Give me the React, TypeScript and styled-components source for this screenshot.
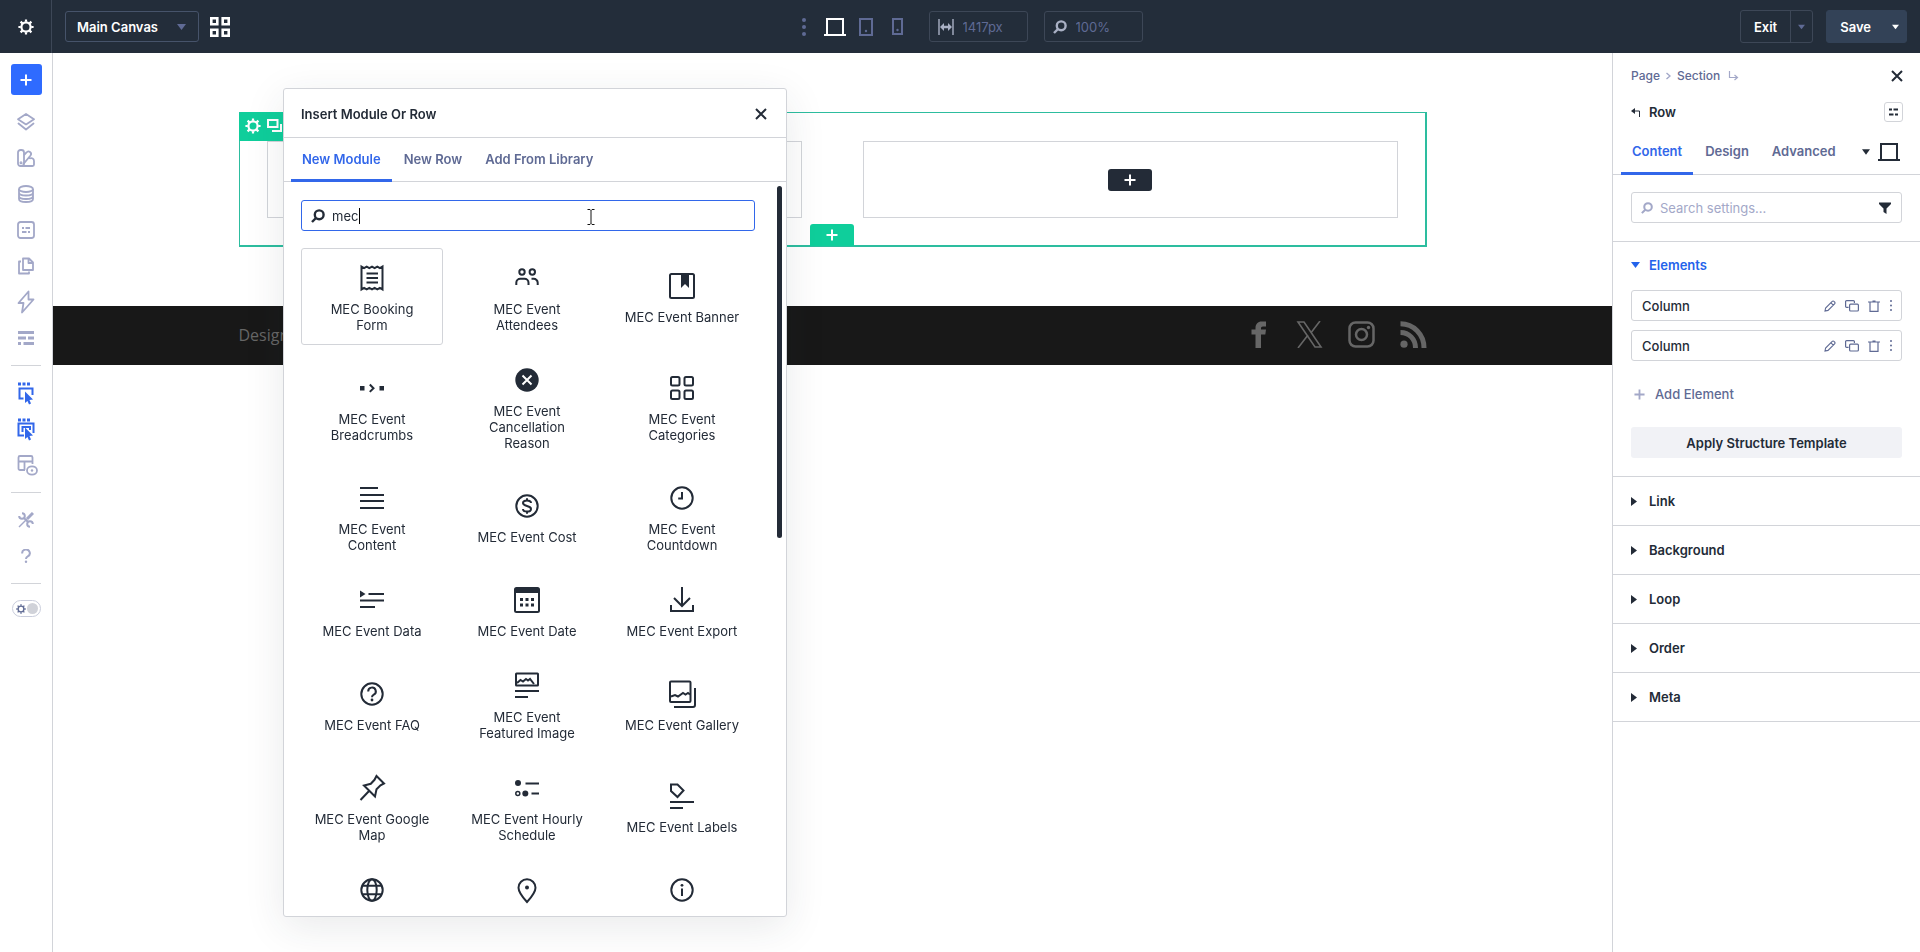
import React from 'react';
import styled, { createGlobalStyle, css } from 'styled-components';

const c = {
  bar: '#232d3a',
  barLine: '#3d4757',
  ink: '#232b37',
  muted: '#5f6a94',
  soft: '#a3a8c8',
  line: '#d2d4d9',
  blue: '#3267ea',
  green: '#0fce9b',
};

const GlobalStyle = createGlobalStyle`
  *, *::before, *::after { box-sizing: border-box; }
  body {
    margin: 0;
    background: #fff;
    color: ${c.ink};
    font-family: Inter, "Liberation Sans", sans-serif;
    font-size: 13px;
    line-height: 16px;
    overflow: hidden;
  }
  button, input, select { font: inherit; color: inherit; margin: 0; padding: 0; border: 0; background: none; outline: none; }
  button { cursor: pointer; }
  svg { display: block; flex: none; }
  ul { list-style: none; margin: 0; padding: 0; }
`;

/* ---------- icons ---------- */

type IconProps = { size?: number; width?: number; height?: number; box?: string; sw?: number; children?: React.ReactNode };

const Svg = ({ size = 28, width, height, box, sw = 2, children }: IconProps) => (
  <svg
    width={width ?? size}
    height={height ?? size}
    viewBox={box ?? `0 0 ${width ?? size} ${height ?? size}`}
    fill="none"
    stroke="currentColor"
    strokeWidth={sw}
    aria-hidden="true"
  >
    {children}
  </svg>
);

const Filled = { fill: 'currentColor', stroke: 'none' } as const;

const Gear = ({ size = 16 }: { size?: number }) => (
  <Svg size={size} box="0 0 16 16">
    <circle cx="8" cy="8" r="4.6" strokeWidth="2.2" />
    <path d="M8 .4v2.4M8 13.2v2.4M.4 8h2.4M13.2 8h2.4M2.6 2.6l1.8 1.8M11.6 11.6l1.8 1.8M2.6 13.4l1.8-1.8M11.6 4.4l1.8-1.8" strokeWidth="2.2" />
  </Svg>
);

const Plus = ({ size = 12, sw = 2 }: { size?: number; sw?: number }) => (
  <Svg size={size} box="0 0 12 12" sw={sw}><path d="M6 .5v11M.5 6h11" /></Svg>
);

const Triangle = ({ dir = 'down', w = 9 }: { dir?: 'down' | 'right'; w?: number }) => (
  <Svg width={dir === 'down' ? w : 6} height={dir === 'down' ? 6 : 9} box={dir === 'down' ? '0 0 9 6' : '0 0 6 9'}>
    <path d={dir === 'down' ? 'M0 0h9L4.5 6z' : 'M0 0v9l6-4.5z'} {...Filled} />
  </Svg>
);

const Close = () => <Svg size={12} sw={2}><path d="M1 1l10 10M11 1L1 11" /></Svg>;

const Magnifier = ({ size = 14, sw = 2.4 }: { size?: number; sw?: number }) => (
  <Svg size={size} box="0 0 14 14" sw={sw}><circle cx="8.2" cy="5.8" r="4.4" /><path d="M5 9L1 13" /></Svg>
);

const Laptop = () => <Svg width={22} height={18}><path d="M3 16V1h16v15M0 17h22" /></Svg>;

const More = ({ h = 18, r = 2 }: { h?: number; r?: number }) => (
  <Svg width={4} height={h}>
    <circle cx="2" cy={r} r={r} {...Filled} />
    <circle cx="2" cy={h / 2} r={r} {...Filled} />
    <circle cx="2" cy={h - r} r={r} {...Filled} />
  </Svg>
);

const Pencil = () => (
  <Svg size={12} sw={1.1}><path d="M1 11l.6-3L8.2 1.4a1.2 1.2 0 0 1 1.8 0l.6.6a1.2 1.2 0 0 1 0 1.8L4 10.4zM7 2.8l2.3 2.3" /></Svg>
);
const Duplicate = () => (
  <Svg width={14} height={12} sw={1.2}><path d="M3.6 7.4H1.6a1 1 0 0 1-1-1V1.6a1 1 0 0 1 1-1h6.8a1 1 0 0 1 1 1V3" /><rect x="4.6" y="4.2" width="8.8" height="6.8" rx="1" /></Svg>
);
const Trash = () => <Svg width={12} height={12} sw={1.2}><path d="M0 2h12M4.5 1h3M2 2v9.4h8V2" /></Svg>;

const moduleIcons: Record<string, React.ReactNode> = {
  booking: (
    <Svg>
      <path d="M3.5 2.6l2.6 1.5 2.6-1.5 2.6 1.5L14 2.6l2.6 1.5 2.7-1.5 2.6 1.5 2.6-1.5v22.8l-2.6-1.5-2.6 1.5-2.7-1.5-2.6 1.5-2.7-1.5-2.6 1.5-2.6-1.5-2.6 1.5z" />
      <path d="M8.5 9.5H20M8.5 14H20M8.5 18.5H20" />
    </Svg>
  ),
  attendees: (
    <Svg>
      <circle cx="9" cy="8" r="2.7" /><circle cx="19.3" cy="8" r="2.7" />
      <path d="M3.3 21v-2.2a4 4 0 0 1 4-4h4.2a4 4 0 0 1 4 4V21M18.5 14.8h2.2a4 4 0 0 1 4 4V21" />
    </Svg>
  ),
  banner: (
    <Svg><rect x="2" y="2" width="24" height="24" rx="1.5" /><path d="M13 2h8v14l-4-4-4 4z" {...Filled} /></Svg>
  ),
  breadcrumbs: (
    <Svg><path d="M2 12h4.5v4.5H2zM21.5 12H26v4.5h-4.5z" {...Filled} /><path d="M11.8 10.5l3.7 3.7-3.7 3.7" /></Svg>
  ),
  cancel: (
    <Svg><circle cx="14" cy="14" r="11.7" {...Filled} /><path d="M9.5 9.5l9 9M18.5 9.5l-9 9" stroke="#fff" /></Svg>
  ),
  categories: (
    <Svg>
      <rect x="3" y="3" width="8.5" height="8.5" rx="1.5" /><rect x="16.5" y="3" width="8.5" height="8.5" rx="1.5" />
      <rect x="3" y="16.5" width="8.5" height="8.5" rx="1.5" /><rect x="16.5" y="16.5" width="8.5" height="8.5" rx="1.5" />
    </Svg>
  ),
  content: <Svg><path d="M2 4h18M2 11h24M2 17h24M2 24h24" /></Svg>,
  cost: (
    <Svg>
      <circle cx="14" cy="14" r="10.7" />
      <path d="M18 11c0-1.7-1.7-2.6-4-2.6s-4 .9-4 2.7c0 3.8 8 2 8 5.8 0 1.8-1.7 2.7-4 2.7s-4-.9-4-2.6M14 6.2v2.6M14 19.2v2.6" />
    </Svg>
  ),
  countdown: <Svg><circle cx="14" cy="14" r="10.7" /><path d="M14 8v6.5h-3.8" /></Svg>,
  data: <Svg><path d="M2 4.5v7L7.5 8z" {...Filled} /><path d="M10.5 8H26M2 14.5h24M2 21h15" /></Svg>,
  date: (
    <Svg>
      <rect x="2" y="2" width="24" height="24" rx="1.5" /><path d="M2 2h24v5H2z" {...Filled} />
      <path d="M7 12h3v3H7zM12.5 12h3v3h-3zM18 12h3v3h-3zM7 17.5h3v3H7zM12.5 17.5h3v3h-3zM18 17.5h3v3h-3z" {...Filled} />
    </Svg>
  ),
  export: <Svg><path d="M14 1v18M6 12l8 8 8-8M3 19v6h22v-6" /></Svg>,
  faq: (
    <Svg>
      <circle cx="14" cy="14" r="10.7" />
      <path d="M10.2 11.5a3.8 3.8 0 1 1 5.6 3.2c-1.2.7-1.8 1.2-1.8 2.6" /><circle cx="14" cy="20" r="1.4" {...Filled} />
    </Svg>
  ),
  featured: (
    <Svg><rect x="3" y="1.5" width="22" height="12" rx=".5" /><path d="M4 11l3.5-3 2.5 1.5L13 7l2 1.5 2-1.5 4 5M2 19h24M2 25h13" /></Svg>
  ),
  gallery: (
    <Svg>
      <rect x="2" y="1.5" width="20.5" height="20.5" rx="1" /><path d="M3 16.5l4-1.5 3 1.5 5-3.5 2.5 1.5 2.5-1.5 2 1.5M27 8v17a2 2 0 0 1-2 2H6" />
    </Svg>
  ),
  map: <Svg><path d="M18.5 2l7.5 7.5-3.5 1.8-4 4-1.5 7.2L6 11.5l6.8-1.7 3.7-4zM11.5 16.5L2.5 26" /></Svg>,
  hourly: (
    <Svg><circle cx="5" cy="9" r="3" {...Filled} /><circle cx="4.8" cy="19.5" r="2" strokeWidth="1.5" /><circle cx="12.3" cy="19.5" r="3" {...Filled} /><path d="M12.5 9.5H26M18.5 19.5H26" /></Svg>
  ),
  labels: <Svg><path d="M3 2.5h6.5l6 6-6 6.5L3 9zM2 20h24M2 26h13" /></Svg>,
  time: (
    <Svg><circle cx="14" cy="14" r="10.7" /><ellipse cx="14" cy="14" rx="4.7" ry="10.7" /><path d="M4.5 9.7h19M4.5 18.3h19" /></Svg>
  ),
  location: <Svg><path d="M14 26c-5.5-6-8.5-10-8.5-14.3a8.5 8.5 0 0 1 17 0C22.5 16 19.5 20 14 26z" /><circle cx="14" cy="11.5" r="2" {...Filled} /></Svg>,
  info: <Svg><circle cx="14" cy="14" r="10.7" /><path d="M14 12.5V20" /><circle cx="14" cy="9.3" r="1.4" {...Filled} /></Svg>,
};

/* ---------- top bar ---------- */

const Page = styled.div`
  min-height: 100vh;
  display: grid;
  grid-template-rows: 53px 1fr;
`;

const TopBar = styled.header`
  display: grid;
  grid-template-columns: 1fr auto 1fr;
  background: ${c.bar};
  color: #fff;
`;

const BarGroup = styled.div<{ $gap: number; $end?: boolean }>`
  display: flex;
  align-items: center;
  gap: ${p => p.$gap}px;
  ${p => p.$end && css`justify-content: flex-end; padding-right: 13px;`}
`;

const SettingsCell = styled.button`
  width: 52px;
  height: 53px;
  display: grid;
  place-items: center;
  border-right: 1px solid ${c.barLine};
`;

const SelectBox = styled.label`
  position: relative;
  display: flex;
  align-items: center;
  width: 134px;
  height: 31px;
  margin: 0 10px 0 13px;
  border: 1px solid #46536a;
  border-radius: 3px;
  font-weight: 600;
  svg { position: absolute; right: 12px; color: ${c.muted}; pointer-events: none; }
  select { width: 100%; height: 100%; padding-left: 11px; appearance: none; }
`;

const BareButton = styled.button<{ $color?: string }>`
  display: grid;
  place-items: center;
  color: ${p => p.$color ?? 'inherit'};
`;

const Devices = styled.div`
  display: flex;
  align-items: center;
  padding-left: 11px;
  button { width: 31px; height: 31px; }
`;

const BarField = styled.label`
  display: flex;
  align-items: center;
  gap: 9px;
  width: 99px;
  height: 31px;
  padding-left: 8px;
  border: 1px solid ${c.barLine};
  border-radius: 3px;
  color: #a9b0c4;
  input { width: 60px; color: ${c.muted}; }
`;

const SplitButton = styled.div<{ $solid?: boolean }>`
  display: flex;
  height: 33px;
  border-radius: 3px;
  border: 1px solid ${p => (p.$solid ? '#334257' : c.barLine)};
  background: ${p => (p.$solid ? '#334257' : 'transparent')};
  font-weight: 600;
  button:first-child { padding: 0 13px; }
  button:last-child {
    width: 22px;
    display: grid;
    place-items: center;
    ${p => !p.$solid && css`border-left: 1px solid ${c.barLine}; color: ${c.muted};`}
  }
`;

/* ---------- side rail ---------- */

const Body = styled.div`
  display: grid;
  grid-template-columns: 53px minmax(0, 1fr) 308px;
`;

const Rail = styled.nav`
  display: flex;
  flex-direction: column;
  align-items: center;
  padding-top: 11px;
  border-right: 1px solid ${c.line};
`;

const RailAdd = styled.button`
  width: 31px;
  height: 31px;
  margin-bottom: 9px;
  display: grid;
  place-items: center;
  border-radius: 3px;
  background: #2f6bff;
  color: #fff;
`;

const RailButton = styled.button<{ $active?: boolean }>`
  width: 36px;
  height: 36px;
  display: grid;
  place-items: center;
  color: ${p => (p.$active ? c.blue : c.soft)};
`;

const RailLine = styled.hr`
  width: 30px;
  margin: 9px 0;
  border: 0;
  border-top: 1px solid ${c.line};
`;

const ThemeSwitch = styled.label`
  position: relative;
  display: flex;
  align-items: center;
  justify-content: space-between;
  width: 29px;
  height: 17px;
  margin-top: 7px;
  padding: 0 2px 0 3px;
  border: 1px solid #c9cddc;
  border-radius: 9px;
  color: ${c.muted};
  input { position: absolute; inset: 0; opacity: 0; }
  &::after { content: ''; width: 11px; height: 11px; border-radius: 50%; background: #d0d2d9; }
`;

/* ---------- canvas ---------- */

const Canvas = styled.main`
  padding-top: 59px;
`;

const RowFrame = styled.section`
  position: relative;
  display: grid;
  grid-template-columns: 1fr 1fr;
  gap: 61px;
  width: 1188px;
  max-width: 80%;
  margin: 0 auto;
  padding: 28px 27px 27px;
  border: solid #2dbd9f;
  border-width: 1px 2px 2px 1px;
`;

const ColumnFrame = styled.div`
  display: grid;
  place-items: center;
  height: 77px;
  border: 1px solid ${c.line};
`;

const AddChip = styled.button`
  display: grid;
  place-items: center;
  width: 44px;
  height: 22px;
  border-radius: 3px;
  background: ${c.ink};
  color: #fff;
`;

const RowAdd = styled(AddChip)`
  position: absolute;
  bottom: -1px;
  left: 50%;
  transform: translateX(-50%);
  border-radius: 3px 3px 0 0;
  background: ${c.green};
`;

const RowTools = styled.div`
  position: absolute;
  top: -1px;
  left: -1px;
  display: flex;
  align-items: center;
  gap: 6px;
  width: 80px;
  height: 29px;
  padding: 0 6px 2px;
  border-radius: 3px 3px 0 0;
  background: ${c.green};
  color: #fff;
`;

const Footer = styled.footer`
  margin-top: 59px;
  height: 59px;
  background: #181818;
  color: #666;
`;

const FooterInner = styled.div`
  display: flex;
  align-items: center;
  justify-content: space-between;
  width: 1188px;
  max-width: 80%;
  height: 57px;
  margin: 0 auto;
  font: 16px/20px "Open Sans", "Noto Sans", sans-serif;
`;

const Social = styled.div`
  display: flex;
  align-items: center;
  gap: 25px;
  a { color: inherit; }
`;

/* ---------- right panel ---------- */

const Panel = styled.aside`
  border-left: 1px solid ${c.line};
`;

const PanelHead = styled.div`
  display: flex;
  align-items: center;
  justify-content: space-between;
  height: 36px;
  padding: 0 17px 0 18px;
`;

const PanelTop = styled.div`
  padding-top: 5px;
`;

const Crumbs = styled.div`
  display: flex;
  align-items: center;
  gap: 6px;
  font-size: 12px;
  font-weight: 500;
  color: ${c.muted};
  a { color: inherit; text-decoration: none; }
  svg { color: ${c.soft}; }
`;

const RowTitle = styled.div`
  display: flex;
  align-items: center;
  gap: 9px;
  font-weight: 600;
`;

const PresetButton = styled.button`
  width: 19px;
  height: 20px;
  display: grid;
  place-items: center;
  border: 1px solid ${c.line};
  border-radius: 3px;
`;

const Tabs = styled.div`
  display: flex;
  gap: 1px;
  height: 45px;
  padding-left: 8px;
  border-bottom: 1px solid ${c.line};
`;

const Tab = styled.button<{ $active?: boolean }>`
  height: 45px;
  padding: 0 11px;
  border-bottom: 3px solid ${p => (p.$active ? c.blue : 'transparent')};
  color: ${p => (p.$active ? c.blue : c.muted)};
  font-weight: 600;
`;

const ViewPicker = styled.button`
  display: flex;
  align-items: center;
  gap: 8px;
  margin: 0 20px 0 auto;
`;

const SearchWrap = styled.div`
  padding: 17px 18px 18px;
  border-bottom: 1px solid ${c.line};
`;

const Field = styled.label<{ $focused?: boolean }>`
  position: relative;
  display: flex;
  align-items: center;
  gap: 7px;
  height: 31px;
  padding: 0 10px 0 9px;
  border: 1px solid ${p => (p.$focused ? c.blue : c.line)};
  border-radius: 3px;
  color: ${p => (p.$focused ? c.ink : c.soft)};
  input { flex: 1; min-width: 0; caret-color: transparent; }
  input::placeholder { color: ${c.soft}; opacity: 1; }
`;

const FilterButton = styled(BareButton)`
  color: ${c.ink};
`;

const Elements = styled.section`
  padding: 15px 18px 18px;
  border-bottom: 1px solid ${c.line};
`;

const SectionTitle = styled.button<{ $open?: boolean }>`
  display: flex;
  align-items: center;
  gap: ${p => (p.$open ? 9 : 12)}px;
  font-weight: 600;
  color: ${p => (p.$open ? '#2463eb' : c.ink)};
`;

const ElementList = styled.ul`
  display: grid;
  gap: 9px;
  margin: 17px 0 25px;
`;

const ElementRow = styled.li`
  display: flex;
  align-items: center;
  gap: 9px;
  height: 31px;
  padding: 0 8px 0 10px;
  border: 1px solid ${c.line};
  border-radius: 3px;
  font-weight: 500;
  button { color: ${c.muted}; display: grid; }
  button:first-of-type { margin-left: auto; }
`;

const AddElement = styled.button`
  display: flex;
  align-items: center;
  gap: 10px;
  padding-left: 3px;
  font-weight: 500;
  color: ${c.muted};
  svg { color: ${c.soft}; }
`;

const ApplyButton = styled.button`
  width: 100%;
  height: 31px;
  margin-top: 25px;
  border-radius: 3px;
  background: #f1f2f6;
  font-weight: 600;
`;

const Collapsed = styled.section`
  display: flex;
  align-items: center;
  height: 49px;
  padding: 0 18px;
  border-bottom: 1px solid ${c.line};
`;

/* ---------- insert dialog ---------- */

const Dialog = styled.div`
  position: fixed;
  top: 88px;
  bottom: 35px;
  left: 283px;
  width: 504px;
  display: flex;
  flex-direction: column;
  overflow: hidden;
  border: 1px solid ${c.line};
  border-radius: 3px;
  background: #fff;
  box-shadow: 0 10px 40px rgba(40, 45, 60, 0.1);
`;

const DialogHead = styled.div`
  display: flex;
  flex: none;
  align-items: center;
  justify-content: space-between;
  height: 49px;
  padding: 1px 19px 0 17px;
  border-bottom: 1px solid ${c.line};
  font-weight: 600;
`;

const DialogTabs = styled(Tabs)`
  flex: none;
  height: 44px;
  padding-left: 7px;
  ${Tab} { height: 44px; }
`;

const DialogBody = styled.div`
  position: relative;
  flex: 1;
  min-height: 0;
  overflow: hidden;
  padding: 18px 31px 0 17px;
`;

const ScrollThumb = styled.div`
  position: absolute;
  top: 4px;
  right: 4px;
  width: 5px;
  height: 48%;
  border-radius: 3px;
  background: ${c.ink};
`;

const Caret = styled.span`
  position: absolute;
  left: 57px;
  width: 1px;
  height: 16px;
  background: #000;
`;

const Pointer = styled.span`
  position: absolute;
  left: 285px;
  top: 8px;
  color: #111;
`;

const ModuleGrid = styled.div`
  display: grid;
  grid-template-columns: repeat(3, 1fr);
  gap: 5px 13px;
  margin-top: 17px;
  padding-right: 2px;
`;

const ModuleCard = styled.button<{ $hover?: boolean }>`
  display: flex;
  flex-direction: column;
  align-items: center;
  justify-content: center;
  gap: 9px;
  padding: 15px 12px 11px;
  border: 1px solid ${p => (p.$hover ? c.line : 'transparent')};
  border-radius: 3px;
`;

const modules: [string, string][] = [
  ['booking', 'MEC Booking Form'], ['attendees', 'MEC Event Attendees'], ['banner', 'MEC Event Banner'],
  ['breadcrumbs', 'MEC Event Breadcrumbs'], ['cancel', 'MEC Event Cancellation Reason'], ['categories', 'MEC Event Categories'],
  ['content', 'MEC Event Content'], ['cost', 'MEC Event Cost'], ['countdown', 'MEC Event Countdown'],
  ['data', 'MEC Event Data'], ['date', 'MEC Event Date'], ['export', 'MEC Event Export'],
  ['faq', 'MEC Event FAQ'], ['featured', 'MEC Event Featured Image'], ['gallery', 'MEC Event Gallery'],
  ['map', 'MEC Event Google Map'], ['hourly', 'MEC Event Hourly Schedule'], ['labels', 'MEC Event Labels'],
];

const iconModules: [string, string][] = [['time', 'Local time'], ['location', 'Location'], ['info', 'More info']];

const railTop: [string, React.ReactNode][] = [
  ['Layers', <Svg size={18} sw={1.8}><path d="M9 1l8 5.2-8 5.2-8-5.2zM1.5 10.5L9 16.5l7.5-6" strokeLinejoin="round" strokeLinecap="round" /></Svg>],
  ['Presets', <Svg size={18} sw={1.8}><rect x="1" y="1" width="6" height="16" rx="2.5" /><path d="M7 6l2.5-2.5a2.5 2.5 0 0 1 4 3L6 15.5M12.5 9.5c2.5-1 4.5 0 4.5 2.5v3.5a1.500 1.500 0 0 1-1.500 1.500H4.500" /><circle cx="4" cy="13.7" r=".6" /></Svg>],
  ['Data', <Svg size={18} sw={1.8}><ellipse cx="9" cy="4" rx="7" ry="3" /><path d="M2 4v10c0 1.7 3 3 7 3s7-1.3 7-3V4M2 7.500c0 1.7 3 3 7 3s7-1.3 7-3M2 11c0 1.7 3 3 7 3s7-1.3 7-3" /></Svg>],
  ['Variables', <Svg size={18} sw={1.8}><rect x="1" y="1" width="16" height="16" rx="2.5" /><path d="M5 7h2M8.500 7H13M5 11h4.500M11 11h2" /></Svg>],
  ['Pages', <Svg size={18} sw={1.8}><path d="M6 1.500h6l4 4V13H6zM11.500 1.500V6H16M4 4.500H2v12h10v-2" strokeLinejoin="round" /></Svg>],
  ['Interactions', <Svg width={18} height={24} sw={1.8}><path d="M11.500 1.500L1.500 13h5l-1.500 9.500L16.500 9.500h-5z" strokeLinejoin="round" /></Svg>],
  ['Wireframe', <Svg width={16} height={16} sw={3}><path d="M0 2.500h16M0 8h8M10 8h6M0 13.500h3M5.500 13.500H16" /></Svg>],
];

const clickCursor = <path d="M8 10.500v11.500l2.500-2 1.500 3.500 2-1-1.500-3.500 3.500-.5z" {...Filled} />;
const dots = <path d="M1 1.500h3v3H1zM5.500 1.500h3v3h-3zM10 1.500h3v3h-3z" {...Filled} />;

const railMid: [string, boolean, React.ReactNode][] = [
  ['Click mode', true, <Svg width={18} height={24}>{dots}<path d="M6.500 17.500H2.500V7.500h13V14" />{clickCursor}</Svg>],
  ['Parent click mode', true, <Svg width={18} height={24}>{dots}<path d="M7 18.500H1.500V6.500h15V16M5.500 15V10h7.500V13" />{clickCursor}</Svg>],
  ['Preview layout', false, <Svg width={24} height={22} sw={1.8}><path d="M11 16H6a1.500 1.500 0 0 1-1.500-1.500V3.500A1.500 1.500 0 0 1 6 2h11a1.500 1.500 0 0 1 1.500 1.500V10M5 7.500h13.500M10.500 7.500V16" /><ellipse cx="18" cy="16.500" rx="5" ry="4.200" /><circle cx="18" cy="16.500" r="1.200" {...Filled} /></Svg>],
];

const railBottom: [string, React.ReactNode][] = [
  ['Tools', <Svg size={16} sw={2}><path d="M4 1.200A2.800 2.800 0 1 1 1.200 4M12 14.800A2.800 2.800 0 1 1 14.800 12M5.500 5.500l5 5" /><path d="M15 1L9 7" strokeWidth="3" /><path d="M9 7l-8 8" strokeWidth="1.500" /></Svg>],
  ['Help', <Svg width={10} height={14}><path d="M1.200 4.500a3.800 3.600 0 1 1 5.600 2.800C5.500 8 5 8.500 5 10" /><circle cx="5" cy="12.800" r="1.200" {...Filled} /></Svg>],
];

export default function App() {
  return (
    <Page>
      <GlobalStyle />
      <TopBar>
        <BarGroup $gap={0}>
          <SettingsCell aria-label="Settings"><Gear /></SettingsCell>
          <SelectBox>
            <select aria-label="Canvas"><option>Main Canvas</option></select>
            <Triangle />
          </SelectBox>
          <BareButton aria-label="All canvases">
            <Svg size={22} sw={2.6}><path d="M2.300 2.300h6v6h-6zM13.700 2.300h6v6h-6zM2.300 13.700h6v6h-6zM13.700 13.700h6v6h-6z" /></Svg>
          </BareButton>
        </BarGroup>
        <BarGroup $gap={16}>
          <Devices>
            <BareButton $color={c.muted} aria-label="More"><More /></BareButton>
            <BareButton aria-label="Desktop"><Laptop /></BareButton>
            <BareButton $color={c.muted} aria-label="Tablet"><Svg width={14} height={18}><path d="M1 1h12v16H1z" /><circle cx="7" cy="13" r="1.2" {...Filled} /></Svg></BareButton>
            <BareButton $color={c.muted} aria-label="Phone"><Svg width={11} height={17}><path d="M1 1h9v15H1z" /><circle cx="5.500" cy="12" r="1.2" {...Filled} /></Svg></BareButton>
          </Devices>
          <BarField>
            <Svg size={16} sw={1.4}><path d="M1 0v16M15 0v16" /><path d="M2 8l4-4v2.800h4V4l4 4-4 4V9.200H6V12z" {...Filled} /></Svg>
            <input aria-label="Width" defaultValue="1417px" />
          </BarField>
          <BarField>
            <Magnifier />
            <input aria-label="Zoom" defaultValue="100%" />
          </BarField>
        </BarGroup>
        <BarGroup $gap={13} $end>
          <SplitButton>
            <button>Exit</button>
            <button aria-label="Exit options"><Triangle w={7} /></button>
          </SplitButton>
          <SplitButton $solid>
            <button>Save</button>
            <button aria-label="Save options"><Triangle w={7} /></button>
          </SplitButton>
        </BarGroup>
      </TopBar>

      <Body>
        <Rail aria-label="Builder tools">
          <RailAdd aria-label="Add"><Plus size={12} /></RailAdd>
          {railTop.map(([name, icon]) => <RailButton key={name} aria-label={name}>{icon}</RailButton>)}
          <RailLine />
          {railMid.map(([name, on, icon]) => <RailButton key={name} $active={on} aria-label={name}>{icon}</RailButton>)}
          <RailLine />
          {railBottom.map(([name, icon]) => <RailButton key={name} aria-label={name}>{icon}</RailButton>)}
          <RailLine />
          <ThemeSwitch><input type="checkbox" aria-label="Dark mode" /><Gear size={10} /></ThemeSwitch>
        </Rail>

        <Canvas>
          <RowFrame>
            <ColumnFrame />
            <ColumnFrame><AddChip aria-label="Add module"><Plus /></AddChip></ColumnFrame>
            <RowTools>
              <BareButton aria-label="Row settings"><Gear /></BareButton>
              <BareButton aria-label="Duplicate row"><Svg size={16}><path d="M1 2h9.500v7H1zM14 6v7H5" /></Svg></BareButton>
            </RowTools>
            <RowAdd aria-label="Add row"><Plus /></RowAdd>
          </RowFrame>
          <Footer>
            <FooterInner>
              <span>Designed</span>
              <Social>
                <a href="#facebook" aria-label="Facebook"><Svg size={27}><path d="M11.500 27V13.500H7.500v-5h4V7c0-4 2.500-6.500 6-6.500h4.500v5h-3c-1.500 0-2 .8-2 2v1h5l-.7 5h-4.300V27z" {...Filled} /></Svg></a>
                <a href="#x" aria-label="X"><Svg size={27} sw={1.6}><path d="M2 1h6l17 25h-6zM24 0L15.200 11.500M2 27l10-13" /></Svg></a>
                <a href="#instagram" aria-label="Instagram"><Svg size={27} sw={2.5}><rect x="1.500" y="1.500" width="24" height="24" rx="6" /><circle cx="13.500" cy="13.500" r="5.500" /><circle cx="20.500" cy="6.500" r="1.700" {...Filled} /></Svg></a>
                <a href="#rss" aria-label="RSS"><Svg size={27} sw={5}><circle cx="4" cy="23.200" r="3.600" {...Filled} /><path d="M.5 11.500c8.500 0 15 6.500 15 15.500M.5 2.800C13.500 2.800 24 13.500 24 27" /></Svg></a>
              </Social>
            </FooterInner>
          </Footer>
        </Canvas>

        <Panel>
          <PanelTop>
            <PanelHead>
              <Crumbs>
                <a href="#page">Page</a>
                <Svg width={5} height={8} sw={1.4}><path d="M.5 1l3.500 3-3.500 3" /></Svg>
                <a href="#section">Section</a>
                <Svg width={14} height={10} sw={1.2}><path d="M3.500 0v6.500H11M8.500 4l3 2.500-3 2.500" /></Svg>
              </Crumbs>
              <BareButton aria-label="Close panel"><Close /></BareButton>
            </PanelHead>
            <PanelHead>
              <RowTitle>
                <Svg width={9} height={9} sw={1}><path d="M8.500 9V3H3" /><path d="M0 3l4-3v6z" {...Filled} /></Svg>
                Row
              </RowTitle>
              <PresetButton aria-label="Presets"><Svg width={9} height={8}><path d="M0 1.500h3M4.500 1.500H9M0 6.500h4.500M6 6.500h3" /></Svg></PresetButton>
            </PanelHead>
          </PanelTop>
          <Tabs>
            <Tab $active>Content</Tab>
            <Tab>Design</Tab>
            <Tab>Advanced</Tab>
            <ViewPicker aria-label="View"><Triangle w={8} /><Laptop /></ViewPicker>
          </Tabs>
          <SearchWrap>
            <Field>
              <Magnifier size={12} />
              <input aria-label="Search settings" placeholder="Search settings..." />
              <FilterButton aria-label="Filter"><Svg size={12}><path d="M0 .5h12v1.500L7.500 6.500V12l-3-2V6.500L0 2z" {...Filled} /></Svg></FilterButton>
            </Field>
          </SearchWrap>
          <Elements>
            <SectionTitle $open><Triangle />Elements</SectionTitle>
            <ElementList>
              {[0, 1].map(i => (
                <ElementRow key={i}>
                  Column
                  <button aria-label="Edit"><Pencil /></button>
                  <button aria-label="Duplicate"><Duplicate /></button>
                  <button aria-label="Delete"><Trash /></button>
                  <button aria-label="More"><More h={11} r={1} /></button>
                </ElementRow>
              ))}
            </ElementList>
            <AddElement><Plus size={11} />Add Element</AddElement>
            <ApplyButton>Apply Structure Template</ApplyButton>
          </Elements>
          {['Link', 'Background', 'Loop', 'Order', 'Meta'].map(t => (
            <Collapsed key={t}><SectionTitle><Triangle dir="right" />{t}</SectionTitle></Collapsed>
          ))}
        </Panel>
      </Body>

      <Dialog role="dialog" aria-label="Insert Module Or Row">
        <DialogHead>
          Insert Module Or Row
          <BareButton aria-label="Close"><Close /></BareButton>
        </DialogHead>
        <DialogTabs>
          <Tab $active>New Module</Tab>
          <Tab>New Row</Tab>
          <Tab>Add From Library</Tab>
        </DialogTabs>
        <DialogBody>
          <Field $focused>
            <Magnifier />
            <input aria-label="Search modules" defaultValue="mec" />
            <Caret />
            <Pointer><Svg width={8} height={16} sw={1}><path d="M.5.5H3l1 1 1-1h2.500M4 1.500v13M.5 15.500H3l1-1 1 1h2.500" /></Svg></Pointer>
          </Field>
          <ModuleGrid>
            {modules.map(([icon, label], i) => (
              <ModuleCard key={label} $hover={i === 0}>{moduleIcons[icon]}<span>{label}</span></ModuleCard>
            ))}
            {iconModules.map(([icon, label]) => (
              <ModuleCard key={label} aria-label={label}>{moduleIcons[icon]}</ModuleCard>
            ))}
          </ModuleGrid>
          <ScrollThumb />
        </DialogBody>
      </Dialog>
    </Page>
  );
}
